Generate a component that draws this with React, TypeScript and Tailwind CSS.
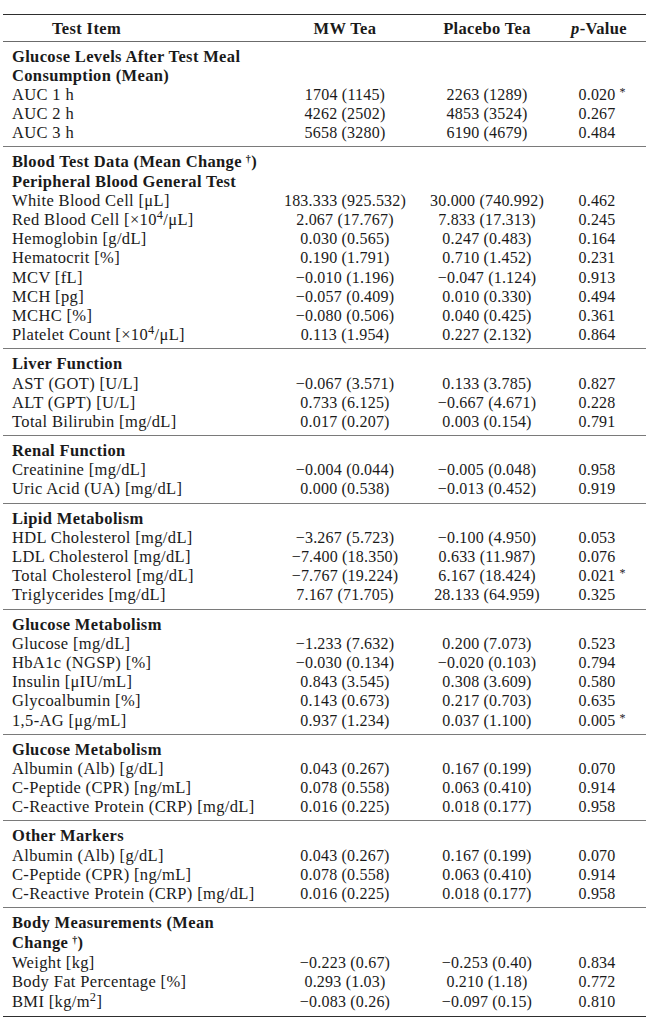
import React from "react";

type Row = { label: React.ReactNode; a?: React.ReactNode; b?: React.ReactNode; p?: React.ReactNode; bold?: boolean };

const M = "\u2212";

const star = (v: string) => (
  <span className="relative">
    {v}
    <span className="absolute left-full ml-[4px] top-[-3px] text-[12px]">*</span>
  </span>
);

const x104 = (
  <>
    [×10<sup>4</sup>/μL]
  </>
);

const dag = <sup className="ml-[4px] text-[10px]">†</sup>;

const sections: Row[][] = [
  [
    { label: "Glucose Levels After Test Meal", bold: true },
    { label: "Consumption (Mean)", bold: true },
    { label: "AUC 1 h", a: "1704 (1145)", b: "2263 (1289)", p: star("0.020") },
    { label: "AUC 2 h", a: "4262 (2502)", b: "4853 (3524)", p: "0.267" },
    { label: "AUC 3 h", a: "5658 (3280)", b: "6190 (4679)", p: "0.484" },
  ],
  [
    { label: <>Blood Test Data (Mean Change{dag})</>, bold: true },
    { label: "Peripheral Blood General Test", bold: true },
    { label: "White Blood Cell [μL]", a: "183.333 (925.532)", b: "30.000 (740.992)", p: "0.462" },
    { label: <>Red Blood Cell {x104}</>, a: "2.067 (17.767)", b: "7.833 (17.313)", p: "0.245" },
    { label: "Hemoglobin [g/dL]", a: "0.030 (0.565)", b: "0.247 (0.483)", p: "0.164" },
    { label: "Hematocrit [%]", a: "0.190 (1.791)", b: "0.710 (1.452)", p: "0.231" },
    { label: "MCV [fL]", a: `${M}0.010 (1.196)`, b: `${M}0.047 (1.124)`, p: "0.913" },
    { label: "MCH [pg]", a: `${M}0.057 (0.409)`, b: "0.010 (0.330)", p: "0.494" },
    { label: "MCHC [%]", a: `${M}0.080 (0.506)`, b: "0.040 (0.425)", p: "0.361" },
    { label: <>Platelet Count {x104}</>, a: "0.113 (1.954)", b: "0.227 (2.132)", p: "0.864" },
  ],
  [
    { label: "Liver Function", bold: true },
    { label: "AST (GOT) [U/L]", a: `${M}0.067 (3.571)`, b: "0.133 (3.785)", p: "0.827" },
    { label: "ALT (GPT) [U/L]", a: "0.733 (6.125)", b: `${M}0.667 (4.671)`, p: "0.228" },
    { label: "Total Bilirubin [mg/dL]", a: "0.017 (0.207)", b: "0.003 (0.154)", p: "0.791" },
  ],
  [
    { label: "Renal Function", bold: true },
    { label: "Creatinine [mg/dL]", a: `${M}0.004 (0.044)`, b: `${M}0.005 (0.048)`, p: "0.958" },
    { label: "Uric Acid (UA) [mg/dL]", a: "0.000 (0.538)", b: `${M}0.013 (0.452)`, p: "0.919" },
  ],
  [
    { label: "Lipid Metabolism", bold: true },
    { label: "HDL Cholesterol [mg/dL]", a: `${M}3.267 (5.723)`, b: `${M}0.100 (4.950)`, p: "0.053" },
    { label: "LDL Cholesterol [mg/dL]", a: `${M}7.400 (18.350)`, b: "0.633 (11.987)", p: "0.076" },
    { label: "Total Cholesterol [mg/dL]", a: `${M}7.767 (19.224)`, b: "6.167 (18.424)", p: star("0.021") },
    { label: "Triglycerides [mg/dL]", a: "7.167 (71.705)", b: "28.133 (64.959)", p: "0.325" },
  ],
  [
    { label: "Glucose Metabolism", bold: true },
    { label: "Glucose [mg/dL]", a: `${M}1.233 (7.632)`, b: "0.200 (7.073)", p: "0.523" },
    { label: "HbA1c (NGSP) [%]", a: `${M}0.030 (0.134)`, b: `${M}0.020 (0.103)`, p: "0.794" },
    { label: "Insulin [μIU/mL]", a: "0.843 (3.545)", b: "0.308 (3.609)", p: "0.580" },
    { label: "Glycoalbumin [%]", a: "0.143 (0.673)", b: "0.217 (0.703)", p: "0.635" },
    { label: "1,5-AG [μg/mL]", a: "0.937 (1.234)", b: "0.037 (1.100)", p: star("0.005") },
  ],
  [
    { label: "Glucose Metabolism", bold: true },
    { label: "Albumin (Alb) [g/dL]", a: "0.043 (0.267)", b: "0.167 (0.199)", p: "0.070" },
    { label: "C-Peptide (CPR) [ng/mL]", a: "0.078 (0.558)", b: "0.063 (0.410)", p: "0.914" },
    { label: "C-Reactive Protein (CRP) [mg/dL]", a: "0.016 (0.225)", b: "0.018 (0.177)", p: "0.958" },
  ],
  [
    { label: "Other Markers", bold: true },
    { label: "Albumin (Alb) [g/dL]", a: "0.043 (0.267)", b: "0.167 (0.199)", p: "0.070" },
    { label: "C-Peptide (CPR) [ng/mL]", a: "0.078 (0.558)", b: "0.063 (0.410)", p: "0.914" },
    { label: "C-Reactive Protein (CRP) [mg/dL]", a: "0.016 (0.225)", b: "0.018 (0.177)", p: "0.958" },
  ],
  [
    { label: "Body Measurements (Mean", bold: true },
    { label: <>Change{dag})</>, bold: true },
    { label: "Weight [kg]", a: `${M}0.223 (0.67)`, b: `${M}0.253 (0.40)`, p: "0.834" },
    { label: "Body Fat Percentage [%]", a: "0.293 (1.03)", b: "0.210 (1.18)", p: "0.772" },
    { label: <>BMI [kg/m<sup>2</sup>]</>, a: `${M}0.083 (0.26)`, b: `${M}0.097 (0.15)`, p: "0.810" },
  ],
];

function RowView({ r, tall }: { r: Row; tall: boolean }) {
  return (
    <div
      className={`grid grid-cols-[267px_150px_134px_1fr] items-center ${tall ? "h-[19.7px] leading-[19.7px]" : "h-[19.2px] leading-[19.2px]"}`}
    >
      <div className={`pl-[9px] whitespace-nowrap text-[16.5px] tracking-[0.35px] ${r.bold ? "font-bold" : ""}`}>{r.label}</div>
      <div className="text-center whitespace-nowrap">{r.a}</div>
      <div className="text-center whitespace-nowrap">{r.b}</div>
      <div className="text-center whitespace-nowrap pr-[6px]">{r.p}</div>
    </div>
  );
}

export default function App() {
  return (
    <div
      className="w-[646px] h-[1024px] bg-white text-[#1a1a1a] overflow-hidden"
      style={{ fontFamily: '"Liberation Serif", "Times New Roman", serif' }}
    >
      <div className="h-[14px]" />
      <div className="ml-[3px] text-[16px] tracking-[0.2px]">
        <div className="border-t-[1.5px] border-[#2e2e2e]" />
        <div className="grid grid-cols-[267px_150px_134px_1fr] h-[26.5px] pt-[2px] items-center font-bold text-[16.5px] tracking-[0.35px] border-b border-[#6b6b6b]">
          <div className="pl-[49px]">Test Item</div>
          <div className="text-center">MW Tea</div>
          <div className="text-center">Placebo Tea</div>
          <div className="text-center pr-[2px]">
            <span className="italic">p</span>-Value
          </div>
        </div>
        {sections.map((sec, i) => {
          const last = i === sections.length - 1;
          return (
            <div
              key={i}
              className={`pt-[5px] pb-[4px] ${last ? "border-b-[1.5px] border-[#2e2e2e]" : "border-b border-[#7a7a7a]"}`}
            >
              {sec.map((r, j) => (
                <RowView key={j} r={r} tall={last} />
              ))}
            </div>
          );
        })}
      </div>
    </div>
  );
}
